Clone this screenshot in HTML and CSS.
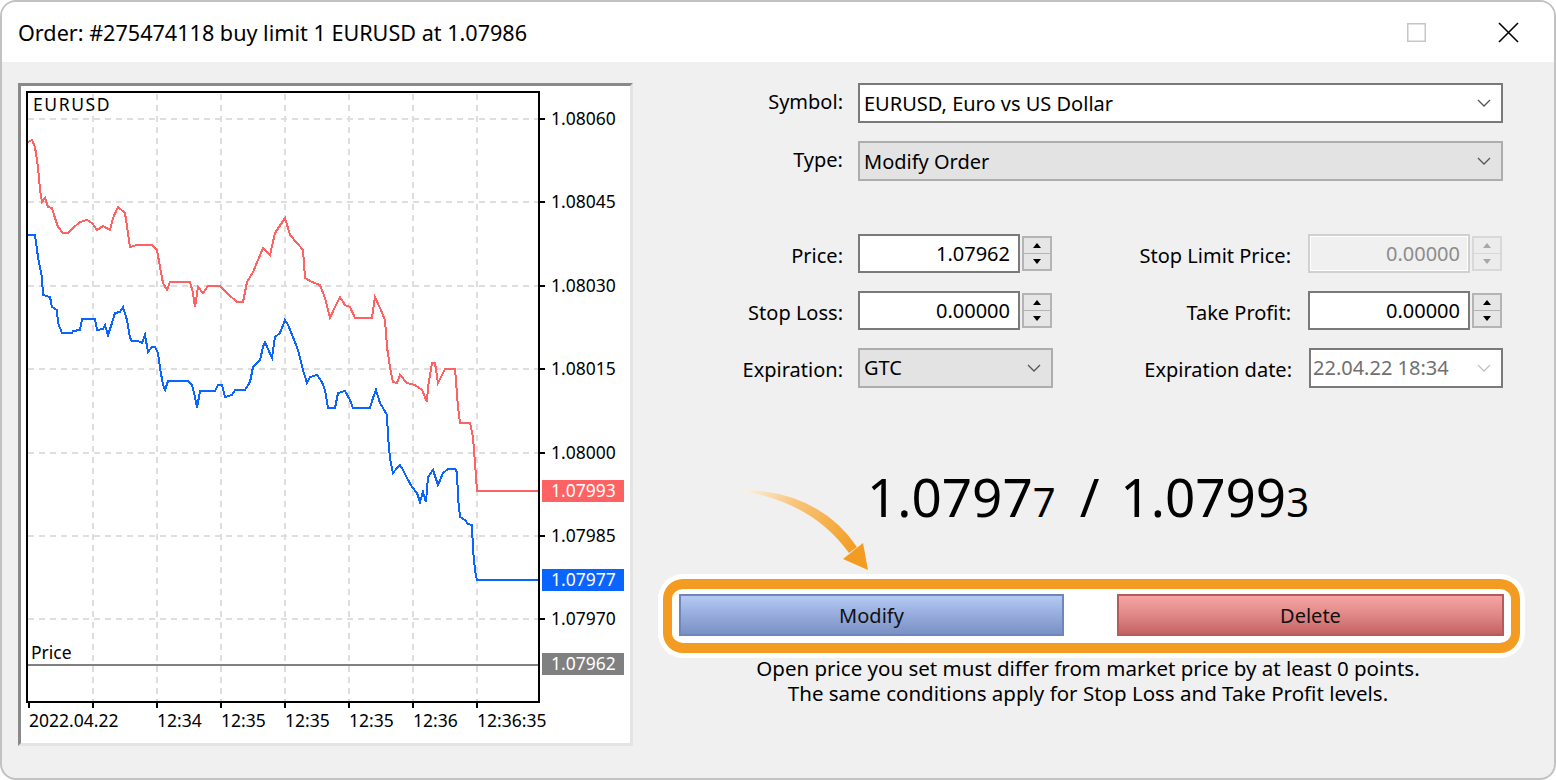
FILE: index.html
```html
<!DOCTYPE html>
<html>
<head>
<meta charset="utf-8">
<title>Order</title>
<link rel="stylesheet" href="styles.css">
</head>
<body>
<div class="window">
  <div class="titlebar">
    <div class="title">Order: #275474118 buy limit 1 EURUSD at 1.07986</div>
    <div class="controls">
      <svg class="ctl-max" width="19" height="19" viewBox="0 0 19 19"><rect x="0.75" y="0.75" width="17.5" height="17.5" fill="none" stroke="#c6c6c6" stroke-width="1.5"/></svg>
      <svg class="ctl-close" width="21" height="21" viewBox="0 0 21 21"><path d="M1 1L20 20M20 1L1 20" stroke="#000" stroke-width="1.6"/></svg>
    </div>
  </div>
  <div class="body">
    <div class="chart-frame">
      <svg class="chart" width="609" height="657" viewBox="21 86 609 657">
        <g class="grid" stroke="#dedede" stroke-width="2" stroke-dasharray="6 5">
          <line x1="28" y1="119" x2="538" y2="119"/>
          <line x1="28" y1="202" x2="538" y2="202"/>
          <line x1="28" y1="286" x2="538" y2="286"/>
          <line x1="28" y1="369" x2="538" y2="369"/>
          <line x1="28" y1="453" x2="538" y2="453"/>
          <line x1="28" y1="536" x2="538" y2="536"/>
          <line x1="28" y1="619" x2="538" y2="619"/>
          <line x1="93" y1="94" x2="93" y2="701"/>
          <line x1="157" y1="94" x2="157" y2="701"/>
          <line x1="221" y1="94" x2="221" y2="701"/>
          <line x1="285" y1="94" x2="285" y2="701"/>
          <line x1="349" y1="94" x2="349" y2="701"/>
          <line x1="413" y1="94" x2="413" y2="701"/>
          <line x1="477" y1="94" x2="477" y2="701"/>
        </g>
        <line x1="28" y1="665" x2="538" y2="665" stroke="#808080" stroke-width="2"/>
        <polyline class="ask" fill="none" stroke="#ff6262" stroke-width="2" shape-rendering="crispEdges" points="28,142 32,140 35,147 38,167 40,190 42,202 45,198 48,207 52,208 55,218 58,227 63,233 68,233 73,228 80,222 87,220 92,223 97,230 103,226 110,230 113,218 118,207 125,213 130,247 137,245 152,245 157,250 160,267 163,283 167,290 170,282 190,282 193,293 195,307 198,287 203,293 208,286 220,286 227,293 237,302 243,302 247,282 253,272 263,248 270,255 275,233 285,218 290,235 297,243 303,250 305,278 312,282 320,285 325,298 330,318 335,307 340,297 345,305 350,307 355,318 372,318 375,297 380,308 385,320 387,347 390,367 393,382 397,383 400,375 407,383 415,385 422,390 427,402 428,387 432,363 435,363 438,383 445,369 455,369 458,407 460,423 470,423 473,437 475,463 477,491 539,491"/>
        <polyline class="bid" fill="none" stroke="#0a64ff" stroke-width="2" shape-rendering="crispEdges" points="28,235 35,235 38,257 42,278 43,295 50,297 52,307 57,310 58,323 62,333 72,333 73,331 80,330 82,319 95,319 97,330 103,329 105,325 108,335 112,323 115,313 120,312 123,307 127,320 130,338 132,341 138,341 142,343 145,335 148,352 152,347 155,347 158,353 160,368 163,385 165,390 168,381 188,381 192,385 195,397 197,408 200,391 215,391 218,385 222,385 225,397 232,395 235,390 245,390 250,382 253,367 260,360 263,347 265,342 272,358 275,337 280,333 285,320 288,325 293,337 298,350 303,370 307,383 310,377 317,375 322,382 325,390 328,408 335,408 338,393 345,391 350,400 353,408 370,408 373,398 376,390 380,403 383,408 387,415 388,437 390,458 393,473 397,468 400,465 403,470 407,478 412,487 417,493 420,502 423,492 426,502 428,477 433,470 438,485 443,473 448,469 455,469 457,472 458,498 460,517 465,520 468,524 472,525 473,550 475,570 477,580 539,580"/>
        <rect x="27" y="92" width="512" height="610" fill="none" stroke="#000" stroke-width="2"/>
        <g stroke="#000" stroke-width="2">
          <line x1="539" y1="119" x2="545" y2="119"/>
          <line x1="539" y1="202" x2="545" y2="202"/>
          <line x1="539" y1="286" x2="545" y2="286"/>
          <line x1="539" y1="369" x2="545" y2="369"/>
          <line x1="539" y1="453" x2="545" y2="453"/>
          <line x1="539" y1="536" x2="545" y2="536"/>
          <line x1="539" y1="619" x2="545" y2="619"/>
          <line x1="29" y1="702" x2="29" y2="708"/>
          <line x1="93" y1="702" x2="93" y2="708"/>
          <line x1="157" y1="702" x2="157" y2="708"/>
          <line x1="221" y1="702" x2="221" y2="708"/>
          <line x1="285" y1="702" x2="285" y2="708"/>
          <line x1="349" y1="702" x2="349" y2="708"/>
          <line x1="413" y1="702" x2="413" y2="708"/>
          <line x1="477" y1="702" x2="477" y2="708"/>
        </g>
        <g class="axis-text">
          <text x="33" y="111" class="sym">EURUSD</text>
          <text x="31" y="659">Price</text>
          <text x="551" y="125">1.08060</text>
          <text x="551" y="208">1.08045</text>
          <text x="551" y="292">1.08030</text>
          <text x="551" y="375">1.08015</text>
          <text x="551" y="459">1.08000</text>
          <text x="551" y="542">1.07985</text>
          <text x="551" y="625">1.07970</text>
          <text x="29" y="727">2022.04.22</text>
          <text x="157" y="727">12:34</text>
          <text x="221" y="727">12:35</text>
          <text x="285" y="727">12:35</text>
          <text x="349" y="727">12:35</text>
          <text x="413" y="727">12:36</text>
          <text x="477" y="727">12:36:35</text>
        </g>
        <rect x="542" y="480" width="82" height="22" fill="#ff6262"/>
        <rect x="542" y="569" width="82" height="22" fill="#0a64ff"/>
        <rect x="542" y="653" width="82" height="22" fill="#808080"/>
        <g class="tag-text">
          <text x="551" y="497">1.07993</text>
          <text x="551" y="586">1.07977</text>
          <text x="551" y="670">1.07962</text>
        </g>
      </svg>
    </div>

    <div class="panel">
      <div class="row top">
        <div class="lbl">Symbol:</div>
        <div class="combo wide">EURUSD, Euro vs US Dollar<svg class="chev" width="14" height="8" viewBox="0 0 14 8"><polyline points="1,1 7,7 13,1" fill="none" stroke="#555" stroke-width="1.3"/></svg></div>
      </div>
      <div class="row top type-row">
        <div class="lbl">Type:</div>
        <div class="combo wide gray">Modify Order<svg class="chev" width="14" height="8" viewBox="0 0 14 8"><polyline points="1,1 7,7 13,1" fill="none" stroke="#555" stroke-width="1.3"/></svg></div>
      </div>

      <div class="row">
        <div class="lbl">Price:</div>
        <div class="group">
          <div class="num">1.07962</div>
          <div class="spinner"><span><i class="up"></i></span><span><i class="down"></i></span></div>
        </div>
        <div class="lbl2">Stop Limit Price:</div>
        <div class="group">
          <div class="num disabled">0.00000</div>
          <div class="spinner disabled"><span><i class="up"></i></span><span><i class="down"></i></span></div>
        </div>
      </div>
      <div class="row">
        <div class="lbl">Stop Loss:</div>
        <div class="group">
          <div class="num">0.00000</div>
          <div class="spinner"><span><i class="up"></i></span><span><i class="down"></i></span></div>
        </div>
        <div class="lbl2">Take Profit:</div>
        <div class="group">
          <div class="num">0.00000</div>
          <div class="spinner"><span><i class="up"></i></span><span><i class="down"></i></span></div>
        </div>
      </div>
      <div class="row last">
        <div class="lbl">Expiration:</div>
        <div class="combo small gray">GTC<svg class="chev" width="14" height="8" viewBox="0 0 14 8"><polyline points="1,1 7,7 13,1" fill="none" stroke="#555" stroke-width="1.3"/></svg></div>
        <div class="lbl2">Expiration date:</div>
        <div class="combo small date">22.04.22 18:34<svg class="chev" width="14" height="8" viewBox="0 0 14 8"><polyline points="1,1 7,7 13,1" fill="none" stroke="#c2c2c2" stroke-width="1.3"/></svg></div>
      </div>

      <div class="quote">1.0797<span class="pip">7</span><span class="slash">/</span>1.0799<span class="pip">3</span></div>

      <div class="highlight">
        <button class="btn modify">Modify</button>
        <button class="btn delete">Delete</button>
      </div>
      <p class="note">Open price you set must differ from market price by at least 0 points.<br>The same conditions apply for Stop Loss and Take Profit levels.</p>
    </div>

    <svg class="arrow" width="140" height="100" viewBox="0 0 140 100">
      <defs>
        <linearGradient id="ag" gradientUnits="userSpaceOnUse" x1="2" y1="10" x2="115" y2="72">
          <stop offset="0" stop-color="#fdf3e4"/>
          <stop offset="0.4" stop-color="#f8c57c"/>
          <stop offset="1" stop-color="#f39c22"/>
        </linearGradient>
      </defs>
      <path d="M2 9.5 Q80 12 117 67 L109 73 Q72 22 2 11 Z" fill="url(#ag)"/>
      <polygon points="103,79 123,63 128,90" fill="#f39c22"/>
    </svg>
  </div>
</div>
</body>
</html>
```

FILE: styles.css
```css
body {
  margin: 0;
  background: #ffffff;
  font-family: "Noto Sans", "Liberation Sans", sans-serif;
  color: #000;
}

.window {
  position: relative;
  width: 1556px;
  height: 780px;
  box-sizing: border-box;
  border: 2px solid #c2c2c2;
  border-radius: 16px;
  overflow: hidden;
  display: flex;
  flex-direction: column;
  background: #f0f0f0;
}

.titlebar {
  height: 60px;
  flex: none;
  background: #ffffff;
  display: flex;
  align-items: center;
  padding-left: 16px;
  padding-right: 35px;
}

.title {
  font-size: 21.6px;
  color: #000;
}

.controls {
  margin-left: auto;
  display: flex;
  align-items: center;
  gap: 72px;
}

.controls svg {
  display: block;
}

.body {
  flex: 1;
  display: flex;
  align-items: flex-start;
  padding-left: 16px;
  padding-top: 21px;
}

.chart-frame {
  flex: none;
  width: 615px;
  height: 663px;
  box-sizing: border-box;
  border: 3px solid;
  border-color: #8a8a8a #e4e4e4 #e4e4e4 #8a8a8a;
  background: #ffffff;
}

.chart {
  display: block;
}

.axis-text text,
.tag-text text {
  font-family: "Noto Sans", sans-serif;
  font-size: 17.5px;
  fill: #000;
}

.axis-text .sym {
  letter-spacing: 1.6px;
}

.tag-text text {
  fill: #ffffff;
}

/* Right panel */
.panel {
  flex: none;
  width: 856px;
  margin-left: 27px;
}

.row {
  display: flex;
  align-items: center;
  height: 39px;
  margin-bottom: 18px;
}

.row.top {
  height: 40px;
}

.row.type-row {
  margin-bottom: 53px;
}

.row.last {
  margin-bottom: 0;
}

.lbl,
.lbl2 {
  flex: none;
  text-align: right;
  font-size: 20px;
  white-space: nowrap;
  padding-top: 4px;
}

.row.top .lbl {
  padding-top: 0;
  padding-bottom: 4px;
}

.lbl {
  width: 183px;
  margin-right: 15px;
}

.lbl2 {
  width: 239px;
  margin-right: 17px;
}

.combo {
  flex: none;
  box-sizing: border-box;
  height: 40px;
  border: 2px solid #7a7a7a;
  background: #ffffff;
  display: flex;
  align-items: center;
  padding: 0 10px 0 4px;
  font-size: 20px;
  white-space: nowrap;
}

.combo .chev {
  margin-left: auto;
  display: block;
}

.combo.wide {
  width: 645px;
}

.combo.small {
  width: 195px;
}

.combo.gray {
  background: #e3e3e3;
  border-color: #adadad;
}

.combo.date {
  width: 194px;
  padding-left: 2px;
  color: #707070;
}

.group {
  flex: none;
  width: 194px;
  display: flex;
  align-items: center;
  gap: 2px;
}

.num {
  box-sizing: border-box;
  width: 162px;
  height: 39px;
  border: 2px solid #7a7a7a;
  background: #ffffff;
  text-align: right;
  padding-right: 8px;
  line-height: 35px;
  font-size: 20px;
}

.num.disabled {
  border-color: #d0d0d0;
  background: #f0f0f0;
  box-shadow: inset 0 0 0 1px #ffffff;
  color: #8c8c8c;
}

.spinner {
  box-sizing: border-box;
  width: 30px;
  height: 35px;
  border: 2px solid #b4b4b4;
  background: #e6e6e6;
  display: flex;
  flex-direction: column;
}

.spinner span {
  flex: 1;
  display: flex;
  align-items: center;
  justify-content: center;
}

.spinner span + span {
  border-top: 1px solid #b4b4b4;
}

.spinner.disabled {
  border-color: #d8d8d8;
  background: #ececec;
}

.spinner.disabled span + span {
  border-top-color: #d8d8d8;
}

.up,
.down {
  display: block;
  width: 0;
  height: 0;
  border-left: 4px solid transparent;
  border-right: 4px solid transparent;
}

.up {
  border-bottom: 5px solid #000;
}

.down {
  border-top: 5px solid #000;
}

.spinner.disabled .up {
  border-bottom-color: #a8a8a8;
}

.spinner.disabled .down {
  border-top-color: #a8a8a8;
}

/* Quote */
.quote {
  margin-top: 83px;
  text-align: center;
  font-size: 53px;
  line-height: 53px;
  white-space: nowrap;
}

.quote .pip {
  font-size: 40px;
  line-height: 40px;
}

.quote .slash {
  margin: 0 21px 0 24px;
}

/* Highlighted buttons */
.highlight {
  box-sizing: border-box;
  width: 857px;
  margin: 56px 0 0 3px;
  border: solid #f49b22;
  border-width: 10px 9px;
  border-radius: 20px;
  background: #ffffff;
  box-shadow: 0 0 0 5px #ffffff;
  padding: 5px 7px 7px;
  display: flex;
  justify-content: space-between;
}

.btn {
  box-sizing: border-box;
  height: 42px;
  font-family: "Noto Sans", sans-serif;
  font-size: 20px;
  color: #111;
  padding: 0;
}

.modify {
  width: 385px;
  border: 2px solid #6e86bd;
  background: linear-gradient(#b5c9f5, #93a9da 55%, #7a91c4);
}

.delete {
  width: 387px;
  border: 2px solid #b65b5b;
  background: linear-gradient(#f6a4a4, #e08888 50%, #c46262);
}

.note {
  margin: 3px 0 0;
  text-align: center;
  font-size: 20.5px;
  line-height: 25px;
  white-space: nowrap;
}

/* annotation arrow overlay */
.arrow {
  position: absolute;
  left: 738px;
  top: 478px;
}
```
